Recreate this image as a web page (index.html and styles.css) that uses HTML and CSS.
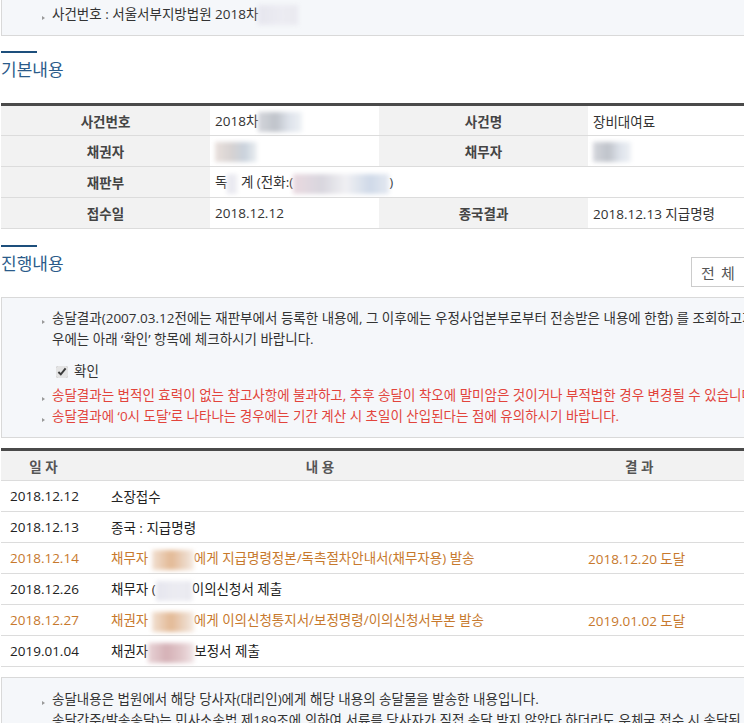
FILE: index.html
```html
<!DOCTYPE html>
<html lang="ko">
  <head>
    <meta charset="utf-8">
    <title>사건일반내용</title>
    <link rel="stylesheet" href="styles.css">
  </head>
  <body>

    <div id="wrap">
      <!-- 사건번호 안내 -->
      <div class="infoBox topBox">
        <ul>
          <li>사건번호 : 서울서부지방법원 2018차<span class="mask m-light w40"></span></li>
        </ul>
      </div>

      <h3 class="tit">기본내용</h3>
      <table class="tblBasic">
        <colgroup>
          <col class="c1">
          <col class="c2">
          <col class="c3">
          <col>
        </colgroup>
        <tbody>
          <tr>
            <th scope="row">사건번호</th>
            <td>2018차<span class="mask m-gray w44"></span></td>
            <th scope="row">사건명</th>
            <td>장비대여료</td>
          </tr>
          <tr>
            <th scope="row">채권자</th>
            <td><span class="mask m-beige w42"></span></td>
            <th scope="row">채무자</th>
            <td><span class="mask m-gray w38"></span></td>
          </tr>
          <tr>
            <th scope="row">재판부</th>
            <td colspan="3">독<span class="mask m-light w10"></span> 계 (전화:(<span class="mask m-blue w96"></span>)</td>
          </tr>
          <tr>
            <th scope="row">접수일</th>
            <td>2018.12.12</td>
            <th scope="row">종국결과</th>
            <td>2018.12.13 지급명령</td>
          </tr>
        </tbody>
      </table>

      <div class="titRow">
        <h3 class="tit">진행내용</h3>
        <select class="sel">
          <option>전 체</option>
        </select>
      </div>

      <div class="infoBox">
        <ul>
          <li>송달결과(2007.03.12전에는 재판부에서 등록한 내용에, 그 이후에는 우정사업본부로부터 전송받은 내용에 한함) 를 조회하고자 하는 경<br>우에는 아래 ‘확인’ 항목에 체크하시기 바랍니다.</li>
        </ul>
        <p class="checkArea">
          <input type="checkbox" id="chkConfirm" checked>
          <label for="chkConfirm">확인</label>
        </p>
        <ul class="red">
          <li>송달결과는 법적인 효력이 없는 참고사항에 불과하고, 추후 송달이 착오에 말미암은 것이거나 부적법한 경우 변경될 수 있습니다.</li>
          <li>송달결과에 ‘0시 도달’로 나타나는 경우에는 기간 계산 시 초일이 산입된다는 점에 유의하시기 바랍니다.</li>
        </ul>
      </div>

      <table class="tblList">
        <colgroup>
          <col class="c1">
          <col class="c2">
          <col>
        </colgroup>
        <thead>
          <tr>
            <th scope="col">일 자</th>
            <th scope="col">내 용</th>
            <th scope="col" class="thResult">결 과</th>
          </tr>
        </thead>
        <tbody>
          <tr>
            <td>2018.12.12</td>
            <td>소장접수</td>
            <td></td>
          </tr>
          <tr>
            <td>2018.12.13</td>
            <td>종국 : 지급명령</td>
            <td></td>
          </tr>
          <tr class="send">
            <td>2018.12.14</td>
            <td>채무자 <span class="mask m-orange w42"></span>에게 지급명령정본/독촉절차안내서(채무자용) 발송</td>
            <td>2018.12.20 도달</td>
          </tr>
          <tr>
            <td>2018.12.26</td>
            <td>채무자 (<span class="mask m-light w36"></span>이의신청서 제출</td>
            <td></td>
          </tr>
          <tr class="send">
            <td>2018.12.27</td>
            <td>채권자 <span class="mask m-orange w42"></span>에게 이의신청통지서/보정명령/이의신청서부본 발송</td>
            <td>2019.01.02 도달</td>
          </tr>
          <tr>
            <td>2019.01.04</td>
            <td>채권자<span class="mask m-pink w46"></span>보정서 제출</td>
            <td></td>
          </tr>
        </tbody>
      </table>

      <div class="infoBox bottomBox">
        <ul>
          <li>송달내용은 법원에서 해당 당사자(대리인)에게 해당 내용의 송달물을 발송한 내용입니다.<br>송달간주(발송송달)는 민사소송법 제189조에 의하여 서류를 당사자가 직접 송달 받지 않았다 하더라도 우체국 접수 시 송달된 것으로 봅니다.</li>
        </ul>
      </div>
    </div>

  </body>
</html>
```

FILE: styles.css
```css
* {
	margin:0;
	padding:0;
	box-sizing:border-box;
}

html, body {overflow:hidden;}
body {color:#333;font-size:13.5px;font-family:"Open Sans","Noto Sans CJK KR",sans-serif;background:#fff;}
#wrap {width:800px;margin-left:1px;}
ul, li {list-style:none;}

/* 안내 박스 */
.infoBox {padding:10px 0 10px 50px;border:1px solid #d9d9d9;background-color:#f5f7fa;line-height:21px;white-space:nowrap;}
.infoBox li {position:relative;}
.infoBox li:before {content:'';position:absolute;left:-10px;top:12px;border-left:3px solid #999;border-top:2px solid transparent;border-bottom:2px solid transparent;}
.infoBox .red li {color:#e2443c;}
.topBox {border-top:0;padding-top:4px;}
.bottomBox {margin-top:10px;padding-top:11px;}
.checkArea {display:flex;align-items:center;gap:6px;margin:11px 0 3px;}
.checkArea input {width:12px;height:12px;margin-left:4px;accent-color:#e4e4e4;}

/* 타이틀 */
.tit {font-size:17px;font-weight:normal;color:#2b5b8a;line-height:22px;}
.tit:before {content:'';display:block;width:36px;height:2px;margin-bottom:6px;background-color:#1d4f7c;}
#wrap > .tit {margin:15px 0 22px;}
.titRow {display:flex;align-items:flex-start;margin:16px 0 10px;}
.sel {width:110px;height:30px;margin:12px 0 0 auto;padding:0 5px;border:1px solid #ccc;background:#fff;color:#555;font-size:15px;font-family:"Noto Sans CJK KR",sans-serif;word-spacing:2px;}

/* 기본내용 테이블 */
table {width:100%;border:0;border-collapse:collapse;table-layout:fixed;}
.tblBasic {border-top:3px solid #4a4a4a;}
.tblBasic .c1 {width:209px;}
.tblBasic .c2 {width:169px;}
.tblBasic .c3 {width:209px;}
.tblBasic th, .tblBasic td {height:31px;border-bottom:1px solid #dcdcdc;vertical-align:middle;}
.tblBasic th {background-color:#f2f2f2;color:#444;font-weight:bold;text-align:center;}
.tblBasic td {padding-left:5px;color:#333;}

/* 진행내용 테이블 */
.tblList {margin-top:10px;border-top:3px solid #4a4a4a;}
.tblList .c1 {width:85px;}
.tblList .c2 {width:468px;}
.tblList th, .tblList td {height:31px;border-bottom:1px solid #dcdcdc;vertical-align:middle;white-space:nowrap;}
.tblList th {background-color:#f2f2f2;color:#555;font-weight:bold;text-align:center;}
.tblList th.thResult {text-align:left;padding-left:71px;}
.tblList td {color:#222;}
.tblList td:nth-child(1) {padding-left:9px;}
.tblList td:nth-child(2) {padding-left:25px;}
.tblList td:nth-child(3) {padding-left:34px;}
.tblList .send td {color:#c7792d;}

/* 개인정보 가림 */
.mask {display:inline-block;height:20px;vertical-align:middle;filter:blur(2px);}
.m-light {background:linear-gradient(90deg,#e6e6ee,#ececf2 60%,#e9e9ef);}
.m-gray {background:linear-gradient(90deg,#d4d6dc,#bfc3ca 40%,#dde2ea 70%,#eef1f5);}
.m-beige {background:linear-gradient(90deg,#e9e0dc,#d6d2d2 40%,#c9d2dc 70%,#eceff2);}
.m-blue {background:linear-gradient(90deg,#ead9e0,#d8d6de 30%,#f0f0f3 55%,#cfd9e8 80%,#e4e9f1);}
.m-orange {background:linear-gradient(90deg,#f1e0d2,#e3b995 45%,#ecd7c6 80%,#f6ece4);}
.m-pink {background:linear-gradient(90deg,#e8d3d6,#d5b1b6 40%,#e2c9cc 75%,#f1e6e8);}
.w10 {width:10px;}
.w36 {width:36px;}
.w38 {width:38px;}
.w40 {width:40px;}
.w42 {width:42px;}
.w44 {width:44px;}
.w46 {width:46px;}
.w96 {width:96px;}
```
